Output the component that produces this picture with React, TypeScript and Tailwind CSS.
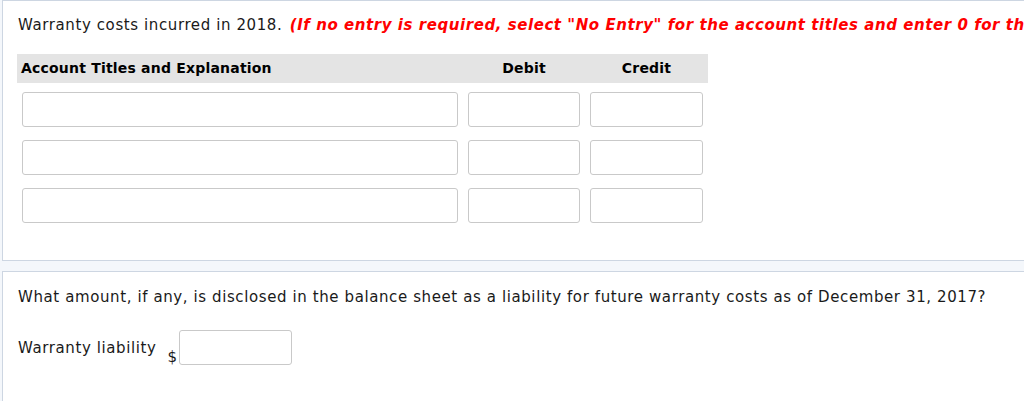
import React from "react";

const font = { fontFamily: '"DejaVu Sans", Verdana, sans-serif' };

function Box({ className = "" }: { className?: string }) {
  return (
    <div
      className={`h-[35px] rounded-[3px] border border-[#c9c9c9] bg-white ${className}`}
    />
  );
}

export default function App() {
  const rows = [0, 1, 2];
  return (
    <div
      className="w-[1024px] h-[401px] overflow-hidden bg-[#f4f7fb] pl-[2px] text-[#1a1a1a]"
      style={font}
    >
      <div className="h-[261px] overflow-hidden border-t border-b border-l border-[#cdd6e2] bg-white pl-[15px] pt-[14px]">
        <div className="whitespace-nowrap text-[15px] leading-[20px] tracking-[0.6px]">
          Warranty costs incurred in 2018.{" "}
          <span className="ml-[2px] font-bold italic tracking-[0.56px] text-[#ff0000]">
            (If no entry is required, select "No Entry" for the account titles and enter 0 for the amounts.)
          </span>
        </div>
        <div className="mt-[19px] -ml-[1px] w-[691px]">
          <div className="flex h-[29px] items-center bg-[#e4e4e4] text-[14px] font-bold tracking-[0.2px] text-black">
            <div className="w-[446px] pl-[4px]">Account Titles and Explanation</div>
            <div className="w-[122px] text-center">Debit</div>
            <div className="w-[123px] text-center">Credit</div>
          </div>
          {rows.map((r) => (
            <div key={r} className="flex pt-[9px] pb-[4px]">
              <div className="w-[446px] px-[5px]">
                <Box />
              </div>
              <div className="w-[122px] px-[5px]">
                <Box />
              </div>
              <div className="w-[123px] px-[5px]">
                <Box />
              </div>
            </div>
          ))}
        </div>
      </div>
      <div className="mt-[10px] h-[200px] border-t border-l border-[#cdd6e2] bg-white pl-[15px] pt-[15px]">
        <div className="whitespace-nowrap text-[15px] leading-[20px] tracking-[0.6px]">
          What amount, if any, is disclosed in the balance sheet as a liability for future warranty costs as of December 31, 2017?
        </div>
        <div className="mt-[23px] flex items-start">
          <div className="pt-[8px] text-[15px] leading-[20px] tracking-[0.6px]">Warranty liability</div>
          <div className="ml-[11px] pt-[17px] text-[15px] leading-[20px]">$</div>
          <div className="ml-[2px] h-[35px] w-[113px] rounded-[3px] border border-[#c9c9c9] bg-white" />
        </div>
      </div>
    </div>
  );
}
